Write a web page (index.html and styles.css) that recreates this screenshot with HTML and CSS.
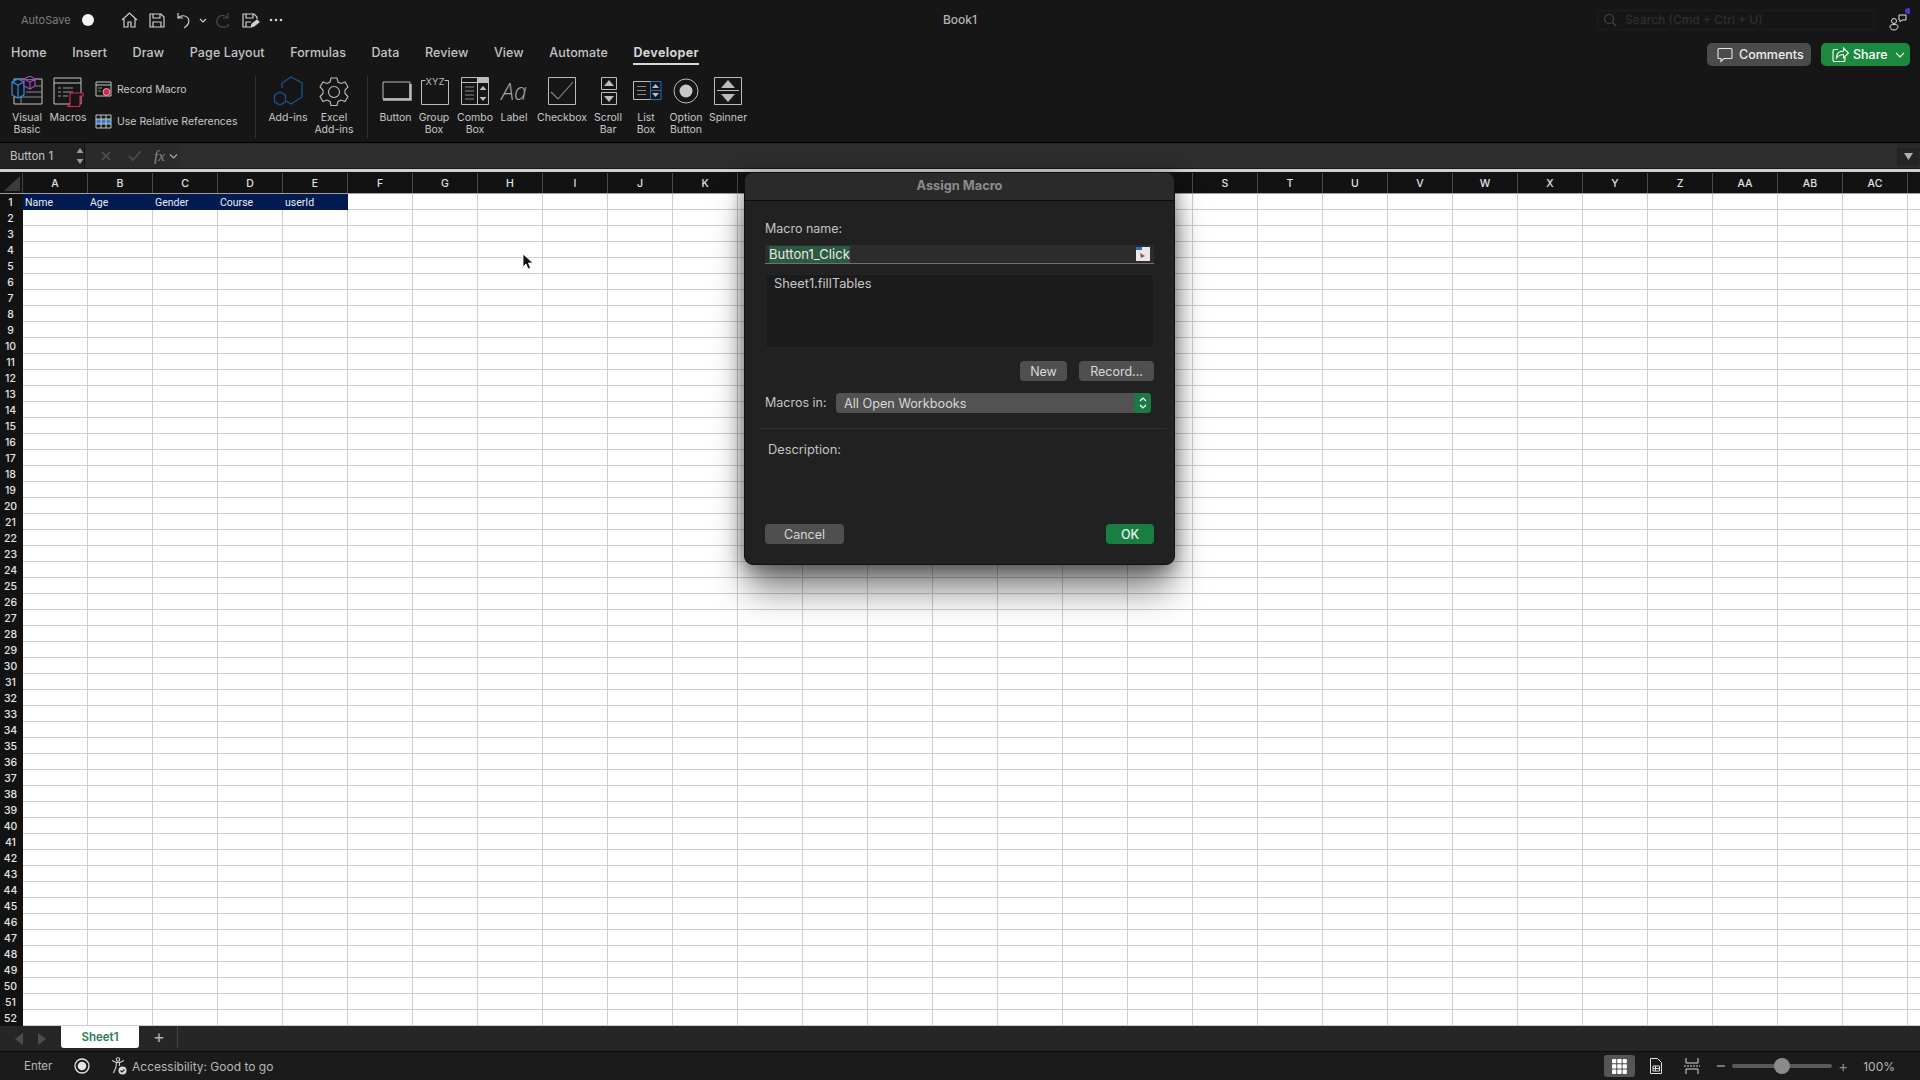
FILE: index.html
```html
<!DOCTYPE html>
<html lang="en">
<head>
<meta charset="UTF-8">
<meta name="viewport" content="width=device-width, initial-scale=1.0">
<title>Book1</title>
<link rel="stylesheet" href="styles.css">
</head>
<body>
<div class="app">

<!-- title bar -->
<header class="titlebar">
    <div class="quick">
        <span class="autosave">AutoSave</span>
        <span class="toggle"></span>
        <svg class="qa" width="27" height="18" viewBox="0 0 27 18" fill="none" stroke="#d0d0d0" stroke-width="1.2"><path d="M6 9 13.5 2 21 9M8 8v8h4v-5h3v5h4V8"/></svg>
        <svg class="qa" width="27" height="18" viewBox="0 0 27 18" fill="none" stroke="#d0d0d0" stroke-width="1.2"><path d="M7 3h11l3 3v10H7zM10 3v4h7V3M10 16v-5h8v5"/></svg>
        <svg class="qa" width="27" height="18" viewBox="0 0 27 18" fill="none" stroke="#d0d0d0" stroke-width="1.2"><path d="M8 2v5h5M8 7c3-3 8-3 10 0s1 7-4 10"/></svg>
        <svg class="qa-small" width="12" height="18" viewBox="0 0 12 18" fill="none" stroke="#c8c8c8" stroke-width="1.2"><path d="M3 8l3 3 3-3"/></svg>
        <svg class="qa" width="27" height="18" viewBox="0 0 27 18" fill="none" stroke="#4a4a4a" stroke-width="1.2"><path d="M19 2v5h-5M19 7c-3-4-10-3-11 2s3 8 8 7 3-2 3-3"/></svg>
        <svg class="qa" width="27" height="18" viewBox="0 0 27 18" fill="none" stroke="#d0d0d0" stroke-width="1.2"><path d="M14 16H7V3h11l3 3v2M10 3v4h7V3M10 16v-5h5"/><path d="M15 16l1-3 5-4 2 2-5 4z" fill="#d0d0d0"/></svg>
        <svg class="qa" width="27" height="18" viewBox="0 0 27 18" fill="#d0d0d0"><circle cx="8" cy="9" r="1.3"/><circle cx="13" cy="9" r="1.3"/><circle cx="18" cy="9" r="1.3"/></svg>
    </div>
    <div class="doc-name">Book1</div>
    <div class="title-right">
        <div class="search">
            <svg width="14" height="14" viewBox="0 0 14 14" fill="none" stroke="#444" stroke-width="1.2"><circle cx="6" cy="6" r="4.5"/><path d="M9.5 9.5 13 13"/></svg>
            <span>Search (Cmd + Ctrl + U)</span>
        </div>
        <svg class="collab" width="22" height="24" viewBox="0 0 22 24" fill="none" stroke="#e0e0e0" stroke-width="1"><circle cx="6" cy="13" r="2.5"/><path d="M2 18c0-2 8-2 8 0s-1 4-4 4-4-2-4-4z"/><path d="M11 7h7v5h-4l-2 2v-2h-1z"/><circle cx="20" cy="3" r="3" fill="#4a35c8" stroke="none"/></svg>
    </div>
</header>

<!-- ribbon tabs -->
<nav class="tabs">
    <span class="tab">Home</span>
    <span class="tab">Insert</span>
    <span class="tab">Draw</span>
    <span class="tab">Page Layout</span>
    <span class="tab">Formulas</span>
    <span class="tab">Data</span>
    <span class="tab">Review</span>
    <span class="tab">View</span>
    <span class="tab">Automate</span>
    <span class="tab active">Developer</span>
    <div class="tab-actions">
        <button class="btn-comments">
            <svg width="18" height="18" viewBox="0 0 18 18" fill="none" stroke="#e6e6e6" stroke-width="1.1"><path d="M3 2.5h12a1 1 0 0 1 1 1v8a1 1 0 0 1-1 1H8l-3 3v-3H3a1 1 0 0 1-1-1v-8a1 1 0 0 1 1-1z"/></svg>
            Comments
        </button>
        <button class="btn-share">
            <svg width="18" height="18" viewBox="0 0 18 18" fill="none" stroke="#fff" stroke-width="1.1"><path d="M7 3.5H3.5a1.5 1.5 0 0 0-1.500 1.500v9a1.500 1.500 0 0 0 1.500 1.500h9a1.500 1.500 0 0 0 1.500-1.500v-3"/><path d="M5.500 12c0-5 3-7 7-7V2l5 5-5 5V8.500c-3 0-5 1-7 3.500z"/></svg>
            Share
            <svg class="share-caret" width="10" height="8" viewBox="0 0 10 8" fill="none" stroke="#e8f5ec" stroke-width="1.1"><path d="M1 2l4 4 4-4"/></svg>
        </button>
    </div>
</nav>

<!-- ribbon -->
<section class="ribbon">
    <div class="rib-item w-vb">
        <svg width="32" height="32" viewBox="0 0 32 32" fill="none"><path d="M3 3h28v25H3z" stroke="#c4c4c4"/><path d="M15 10h16M15 16h16M3 21h28M10 21v7" stroke="#8a8a8a"/><path d="M1 6l6-3 6 3v13l-6 3-6-3zM1 6l6 3 6-3M7 9v13" fill="#161616" stroke="#2d8fe0" stroke-width="1.2"/><path d="M13 3l6-3 5 3v7l-5 3-6-3zM13 3l6 3 5-3M19 6v7" fill="#161616" stroke="#a04cc0" stroke-width="1.200"/></svg>
        <span class="rib-label">Visual<br>Basic</span>
    </div>
    <div class="rib-item w-mac">
        <svg width="32" height="32" viewBox="0 0 32 32" fill="none"><path d="M2 2h27v26H2zM2 7h27" stroke="#c4c4c4"/><path d="M6 12h3M11 12h10M6 16h3M11 16h10M6 20h3M11 20h5" stroke="#9a9a9a"/><path d="M19 17h12v3h-3v9a1.500 1.500 0 0 1-1.500 1.500H16l2-2V18a1 1 0 0 1 1-1z" fill="#161616" stroke="#d8264e" stroke-width="1.200"/></svg>
        <span class="rib-label">Macros</span>
    </div>
    <div class="rib-small">
        <div class="small-row">
            <svg width="17" height="17" viewBox="0 0 17 17" fill="none"><path d="M1 1h15v14H1zM1 4h15" stroke="#c4c4c4"/><path d="M3 7h4M3 10h3" stroke="#888"/><circle cx="11.500" cy="11" r="3.500" fill="#d8264e" stroke="#e8a0b0"/></svg>
            <span>Record Macro</span>
        </div>
        <div class="small-row">
            <svg width="17" height="15" viewBox="0 0 17 15" fill="none"><path d="M1 5h15v5H1z" fill="#2f7fd0"/><path d="M1 1h15v13H1zM1 5h15M1 10h15M6 1v13M11 1v13" stroke="#c4c4c4"/></svg>
            <span>Use Relative References</span>
        </div>
    </div>
    <div class="rib-sep"></div>
    <div class="rib-item w-add">
        <svg width="32" height="32" viewBox="0 0 32 32" fill="none" stroke="#17518f" stroke-width="1.300"><path d="M10 12V7l9-6 11 6v14l-11 7-5-3"/><path d="M8 16l5.500 3.200v6.600L8 29l-5.500-3.200v-6.600z"/></svg>
        <span class="rib-label">Add-ins</span>
    </div>
    <div class="rib-item w-xadd">
        <svg width="32" height="32" viewBox="0 0 32 32" fill="none" stroke="#bcbcbc" stroke-width="1.100"><path d="M13 2h6l1 4 3 1.500 4-1.500 3 5-3 3v3.500l3 3-3 5-4-1.500-3 1.500-1 4h-6l-1-4-3-1.500-4 1.500-3-5 3-3V14l-3-3 3-5 4 1.500L12 6z"/><circle cx="16" cy="16" r="5.500"/></svg>
        <span class="rib-label">Excel<br>Add-ins</span>
    </div>
    <div class="rib-sep sep2"></div>
    <div class="rib-item w-btn">
        <svg width="32" height="32" viewBox="0 0 32 32" fill="none"><path d="M3 6h27v17H3z" stroke="#bcbcbc"/><path d="M3 23.500h27.500V8" stroke="#bcbcbc" stroke-width="2.500"/></svg>
        <span class="rib-label">Button</span>
    </div>
    <div class="rib-item w-grp">
        <svg width="32" height="32" viewBox="0 0 32 32" fill="none"><path d="M7.500 4.500h-4v24h27v-24h-4" stroke="#bcbcbc"/><text x="17" y="9" text-anchor="middle" class="xyz">XYZ</text></svg>
        <span class="rib-label">Group<br>Box</span>
    </div>
    <div class="rib-item w-cmb">
        <svg width="32" height="32" viewBox="0 0 32 32" fill="none"><path d="M2.500 1.500h27v27h-27zM2.500 6.500h27M18.500 1.500v27" stroke="#bcbcbc"/><path d="M18.500 1.500h11v5h-11z" fill="#bcbcbc"/><path d="M6 11h9M6 15h9M6 19h9M6 23h9" stroke="#888"/><path d="M24 10l3.500 4h-7zM24 25l3.500-4h-7z" fill="#bcbcbc"/></svg>
        <span class="rib-label">Combo<br>Box</span>
    </div>
    <div class="rib-item w-lbl">
        <span class="aa-icon">Aa</span>
        <span class="rib-label">Label</span>
    </div>
    <div class="rib-item w-chk">
        <svg width="32" height="32" viewBox="0 0 32 32" fill="none"><path d="M2.500 1.500h27v27h-27z" stroke="#bcbcbc"/><path d="M5 16l7 7 15-17" stroke="#7f9484" stroke-width="1.100"/></svg>
        <span class="rib-label">Checkbox</span>
    </div>
    <div class="rib-item w-scr">
        <svg width="32" height="32" viewBox="0 0 32 32" fill="none"><path d="M9.500 1.500h15v12h-15zM9.500 16.500h15v12h-15z" stroke="#bcbcbc"/><path d="M17 4l5 6H12zM17 26l5-6H12z" fill="#bcbcbc"/></svg>
        <span class="rib-label">Scroll<br>Bar</span>
    </div>
    <div class="rib-item w-lst">
        <svg width="32" height="32" viewBox="0 0 32 32" fill="none"><path d="M3.500 5.500h17v18h-17z" stroke="#bcbcbc"/><path d="M7 10.500h9M7 14.500h9M7 18.500h9" stroke="#888"/><path d="M20.500 5.500h10.500v18H20.500zM20.500 14.500H31" stroke="#1f6fc0"/><path d="M25.500 8l3.500 4h-7zM25.500 21l3.500-4h-7z" fill="#bcbcbc"/></svg>
        <span class="rib-label">List<br>Box</span>
    </div>
    <div class="rib-item w-opt">
        <svg width="32" height="32" viewBox="0 0 32 32" fill="none"><circle cx="16" cy="15" r="12" stroke="#bcbcbc"/><circle cx="16" cy="15" r="6.500" fill="#c8c8c8"/></svg>
        <span class="rib-label">Option<br>Button</span>
    </div>
    <div class="rib-item w-spn">
        <svg width="32" height="32" viewBox="0 0 32 32" fill="none"><path d="M2.500 1.500h27v27h-27z" stroke="#bcbcbc"/><path d="M5 14.500h22" stroke="#bcbcbc"/><path d="M16 4l7 8H9zM16 26l7-8H9z" fill="#bcbcbc"/></svg>
        <span class="rib-label">Spinner</span>
    </div>
</section>

<!-- formula bar -->
<section class="formula">
    <div class="name-box">
        <span>Button 1</span>
        <svg width="8" height="18" viewBox="0 0 8 18" fill="#9a9a9a"><path d="M4 1l3.500 5H.5zM4 17l3.500-5H.5z"/></svg>
    </div>
    <div class="formula-tools">
        <svg width="12" height="12" viewBox="0 0 12 12" fill="none" stroke="#4c4c4c" stroke-width="1.800"><path d="M2 2l8 8M10 2l-8 8"/></svg>
        <svg class="tool-check" width="14" height="12" viewBox="0 0 14 12" fill="none" stroke="#4c4c4c" stroke-width="1.800"><path d="M1 6l4 4 8-9"/></svg>
        <span class="fx">fx</span>
        <svg width="9" height="7" viewBox="0 0 9 7" fill="none" stroke="#aaa" stroke-width="1.200"><path d="M1 1.500l3.500 3.500L8 1.500"/></svg>
    </div>
    <div class="formula-input"></div>
    <div class="formula-drop"><svg width="9" height="7" viewBox="0 0 9 7" fill="#b0b0b0"><path d="M0 0h9L4.500 7z"/></svg></div>
</section>

<!-- sheet -->
<section class="col-head">
    <div class="corner"><svg width="16" height="15" viewBox="0 0 16 15" fill="#3c3c3c"><path d="M16 0v15H0z"/></svg></div>
    <div class="col">A</div><div class="col">B</div><div class="col">C</div><div class="col">D</div><div class="col">E</div>
    <div class="col">F</div><div class="col">G</div><div class="col">H</div><div class="col">I</div><div class="col">J</div>
    <div class="col">K</div><div class="col"></div><div class="col"></div><div class="col"></div><div class="col"></div>
    <div class="col"></div><div class="col"></div><div class="col"></div><div class="col">S</div><div class="col">T</div>
    <div class="col">U</div><div class="col">V</div><div class="col">W</div><div class="col">X</div><div class="col">Y</div>
    <div class="col">Z</div><div class="col">AA</div><div class="col">AB</div><div class="col">AC</div><div class="col"></div>
</section>
<section class="sheet">
    <div class="row-head">
        <div>1</div><div>2</div><div>3</div><div>4</div><div>5</div><div>6</div><div>7</div><div>8</div><div>9</div><div>10</div>
        <div>11</div><div>12</div><div>13</div><div>14</div><div>15</div><div>16</div><div>17</div><div>18</div><div>19</div><div>20</div>
        <div>21</div><div>22</div><div>23</div><div>24</div><div>25</div><div>26</div><div>27</div><div>28</div><div>29</div><div>30</div>
        <div>31</div><div>32</div><div>33</div><div>34</div><div>35</div><div>36</div><div>37</div><div>38</div><div>39</div><div>40</div>
        <div>41</div><div>42</div><div>43</div><div>44</div><div>45</div><div>46</div><div>47</div><div>48</div><div>49</div><div>50</div>
        <div>51</div><div>52</div>
    </div>
    <div class="grid">
        <div class="table-head">
            <span>Name</span><span>Age</span><span>Gender</span><span>Course</span><span>userId</span>
        </div>
    </div>
</section>

<!-- sheet tabs -->
<section class="sheetbar">
    <div class="sheet-nav">
        <svg width="8" height="12" viewBox="0 0 8 12" fill="#4d4d4d"><path d="M8 0v12L0 6z"/></svg>
        <svg width="8" height="12" viewBox="0 0 8 12" fill="#4d4d4d"><path d="M0 0v12l8-6z"/></svg>
    </div>
    <div class="sheet-tab">Sheet1</div>
    <div class="sheet-add">+</div>
</section>

<!-- status bar -->
<footer class="status">
    <span class="mode">Enter</span>
    <svg class="rec" width="16" height="16" viewBox="0 0 16 16"><circle cx="8" cy="8" r="7" fill="none" stroke="#e4e4e4" stroke-width="1.300"/><circle cx="8" cy="8" r="4.300" fill="#e4e4e4"/></svg>
    <svg class="acc" width="16" height="18" viewBox="0 0 16 18" fill="none" stroke="#d0d0d0" stroke-width="1.100"><circle cx="7" cy="2.500" r="1.700"/><path d="M1 3.500l4 2h4l4-2M5.500 5.500 5 10l-2.500 6M8.500 5.500V9"/><circle cx="11.500" cy="13.500" r="4" fill="#d8d8d8" stroke="none"/><path d="M9.500 13.500l1.500 1.500 2.500-2.500" stroke="#222"/></svg>
    <span class="acc-text">Accessibility: Good to go</span>
    <div class="status-right">
        <div class="view-on"><svg width="15" height="15" viewBox="0 0 15 15" fill="#fff"><rect width="4.300" height="4.300" rx="1"/><rect x="5.300" width="4.300" height="4.300" rx=".6"/><rect x="10.600" width="4.300" height="4.300" rx="1"/><rect y="5.300" width="4.300" height="4.300" rx=".6"/><rect x="5.300" y="5.300" width="4.300" height="4.300" rx=".6"/><rect x="10.600" y="5.300" width="4.300" height="4.300" rx=".6"/><rect y="10.600" width="4.300" height="4.300" rx="1"/><rect x="5.300" y="10.600" width="4.300" height="4.300" rx=".6"/><rect x="10.600" y="10.600" width="4.300" height="4.300" rx="1"/></svg></div>
        <svg class="view-page" width="12" height="16" viewBox="0 0 12 16" fill="none" stroke="#e0e0e0"><path d="M.5.500h7l4 4v11H.5z"/><path d="M3 8h6.500v5H3zM3 10.500h6.500M5.500 8v5"/></svg>
        <svg class="view-break" width="16" height="16" viewBox="0 0 16 16" fill="none" stroke="#d8d8d8"><path d="M2 0v5h12V0M2 16v-5h12v5"/><path d="M0 8h16" stroke-dasharray="2 1"/></svg>
        <span class="zoom-minus"></span>
        <div class="slider"><span class="thumb"></span></div>
        <span class="zoom-plus">+</span>
        <span class="zoom-val">100%</span>
    </div>
</footer>

</div>

<!-- assign macro dialog -->
<div class="dialog">
    <div class="dlg-title">Assign Macro</div>
    <div class="dlg-body">
        <div class="dlg-label">Macro name:</div>
        <div class="dlg-input">
            <span class="sel">Button1_Click</span>
            <svg width="14" height="14" viewBox="0 0 14 14"><path d="M0 0h14v14H0z" fill="#e8e8e8"/><path d="M0 0h6v3H0z" fill="#2a6fc0"/><path d="M4 6l5 3-4 2z" fill="#b5405a"/></svg>
        </div>
        <div class="dlg-list">Sheet1.fillTables</div>
        <div class="dlg-actions">
            <button class="dlg-btn btn-new">New</button>
            <button class="dlg-btn btn-record">Record...</button>
        </div>
        <div class="dlg-macros">
            <span class="dlg-label">Macros in:</span>
            <div class="dlg-select">
                <span>All Open Workbooks</span>
                <span class="select-arrows"><svg width="8" height="12" viewBox="0 0 8 12" fill="none" stroke="#fff" stroke-width="1.200"><path d="M1 4l3-3 3 3M1 8l3 3 3-3"/></svg></span>
            </div>
        </div>
        <div class="dlg-rule"></div>
        <div class="dlg-label dlg-desc">Description:</div>
        <div class="dlg-footer">
            <button class="dlg-btn btn-cancel">Cancel</button>
            <button class="dlg-btn btn-ok">OK</button>
        </div>
    </div>
</div>

<!-- mouse pointer -->
<svg class="pointer" width="12" height="18" viewBox="0 0 12 18"><path d="M1 1v13l3-3 2 5 2.500-1-2-5h4.500z" fill="#111" stroke="#fff" stroke-width=".8"/></svg>
</body>
</html>
```

FILE: styles.css
```css
/* Excel window with the Assign Macro dialog */
* {
    box-sizing: border-box;
}
body {
    margin: 0;
    width: 1920px;
    height: 1080px;
    overflow: hidden;
    position: relative;
    background-color: #161616;
    font-family: Inter, "Noto Sans", "Liberation Sans", sans-serif;
    color: #c8c8c8;
}
.app {
    display: flex;
    flex-direction: column;
    height: 1080px;
}
button {
    font-family: inherit;
    border: none;
    padding: 0;
}

/* title bar */
.titlebar {
    height: 36px;
    display: grid;
    grid-template-columns: 1fr auto 1fr;
    align-items: center;
    padding-top: 3px;
}
.quick {
    display: flex;
    align-items: center;
    padding-left: 21px;
}
.autosave {
    font-size: 11px;
    color: #7d7d7d;
    width: 61px;
}
.toggle {
    width: 12px;
    height: 12px;
    border-radius: 50%;
    background-color: #f2f2f2;
    margin-right: 22px;
}
.doc-name {
    font-size: 12px;
    font-weight: 500;
    color: #b4b4b4;
}
.title-right {
    display: flex;
    justify-content: flex-end;
    align-items: center;
    padding-right: 10px;
}
.search {
    width: 277px;
    height: 20px;
    border: 1px solid #1d1d1d;
    display: flex;
    align-items: center;
    gap: 8px;
    padding-left: 5px;
    font-size: 12px;
    font-weight: 500;
    color: #2e2e2e;
    margin-right: 14px;
}

/* ribbon tabs */
.tabs {
    height: 36px;
    display: flex;
    align-items: flex-start;
    gap: 25.500px;
    padding: 8px 10px 0 11px;
}
.tab {
    font-size: 12.500px;
    font-weight: 500;
    letter-spacing: 0.1px;
    line-height: 18px;
    padding-bottom: 1px;
    border-bottom: 2px solid transparent;
    color: #c4c4c4;
}
.tab.active {
    font-weight: 700;
    letter-spacing: 0.35px;
    color: #d4d4d4;
    border-bottom-color: #d8d8d8;
}
.tab-actions {
    margin: -1px 0 0 auto;
    display: flex;
    gap: 10px;
}
.btn-comments, .btn-share {
    height: 23px;
    border-radius: 5px;
    font-size: 12.500px;
    font-weight: 500;
    display: flex;
    align-items: center;
    gap: 5px;
}
.btn-comments {
    width: 104px;
    background-color: #4b4b4b;
    color: #eee;
    padding-left: 9px;
}
.btn-share {
    width: 89px;
    background-color: #1b8a3e;
    color: #fff;
    padding-left: 10px;
    gap: 4px;
}
.share-caret {
    margin-left: 3px;
}

/* ribbon */
.ribbon {
    height: 71px;
    display: flex;
    padding: 4px 0 0 8px;
    border-bottom: 1px solid #000;
}
.rib-item {
    display: flex;
    flex-direction: column;
    align-items: center;
    flex-shrink: 0;
}
.rib-item svg {
    flex-shrink: 0;
    display: block;
}
.rib-label {
    margin-top: 4px;
    font-size: 10.500px;
    line-height: 12px;
    text-align: center;
    color: #c8c8c8;
    white-space: nowrap;
}
.w-vb { width: 38px; }
.w-mac { width: 44px; }
.w-add { width: 40px; }
.w-xadd { width: 52px; }
.w-btn { width: 41px; }
.w-grp { width: 36px; }
.w-cmb { width: 46px; }
.w-lbl { width: 32px; }
.w-chk { width: 64px; }
.w-scr { width: 28px; }
.w-lst { width: 48px; }
.w-opt { width: 32px; }
.w-spn { width: 52px; }
.rib-small {
    width: 160px;
    padding: 5px 0 0 5px;
    display: flex;
    flex-direction: column;
    gap: 15px;
}
.small-row {
    display: flex;
    align-items: center;
    gap: 5px;
    height: 17px;
    font-size: 10.500px;
    color: #c8c8c8;
    white-space: nowrap;
}
.rib-sep {
    width: 1px;
    height: 62px;
    background-color: #333;
    margin: 0 12px 0 5px;
}
.sep2 {
    margin: 0 7px 0 7px;
}
.xyz {
    font-size: 9.500px;
    fill: #bcbcbc;
}
.aa-icon {
    height: 32px;
    font-family: "Open Sans", sans-serif;
    font-size: 23px;
    font-weight: 300;
    font-style: italic;
    line-height: 30px;
    color: #a8a8a8;
}

/* formula bar */
.formula {
    height: 25px;
    display: flex;
    align-items: center;
    background-color: #2a2a2a;
}
.name-box {
    width: 85px;
    height: 25px;
    display: flex;
    align-items: center;
    justify-content: space-between;
    padding: 0 0 0 10px;
    font-size: 11.500px;
    color: #c4c4c4;
    background-color: #232323;
    border-right: 1px solid #111;
}
.formula-tools {
    width: 95px;
    display: flex;
    align-items: center;
    padding: 1px 0 0 15px;
}
.tool-check {
    margin-left: 16px;
}
.fx {
    font-family: "Liberation Serif", serif;
    font-style: italic;
    font-size: 15px;
    color: #8a8a8a;
    margin: 0 4px 0 12px;
}
.formula-input {
    flex: 1;
    height: 24px;
    background-color: #2d2d2d;
}
.formula-drop {
    width: 22px;
    height: 17px;
    margin: 1px 1px 0 0;
    background-color: #242424;
    display: flex;
    align-items: center;
    justify-content: center;
}

/* sheet */
.col-head {
    height: 25px;
    margin-top: 1px;
    padding-top: 1px;
    display: flex;
    background-color: #121212;
    border-top: 3px solid #cfcfcf;
    border-bottom: 1px solid #a0a0a0;
    overflow: hidden;
}
.corner {
    width: 23px;
    flex-shrink: 0;
    display: flex;
    align-items: flex-end;
    justify-content: flex-end;
    padding: 0 2px 2px 0;
    border-right: 1px solid #444;
}
.col {
    width: 65px;
    flex-shrink: 0;
    text-align: center;
    font-size: 10.500px;
    font-weight: 500;
    line-height: 21px;
    color: #e2e2e2;
    border-right: 1px solid #4a4a4a;
}
.sheet {
    height: 832px;
    display: flex;
}
.row-head {
    width: 23px;
    flex-shrink: 0;
    background-color: #121212;
}
.row-head div {
    height: 16px;
    line-height: 18px;
    padding-right: 2px;
    text-align: center;
    font-size: 10.500px;
    font-weight: 500;
    color: #e6e6e6;
}
.grid {
    flex: 1;
    background-color: #fff;
    background-image:
        linear-gradient(to left, #cdcdcd 1px, transparent 1px),
        linear-gradient(to top, #cdcdcd 1px, transparent 1px);
    background-size: 65px 16px;
}
.table-head {
    width: 325px;
    height: 16px;
    display: flex;
    background-color: #011a52;
}
.table-head span {
    width: 65px;
    padding-left: 2px;
    font-family: Roboto, "Liberation Sans", sans-serif;
    font-size: 10.500px;
    line-height: 18px;
    color: #e8ecf4;
}

/* sheet tabs */
.sheetbar {
    height: 26px;
    display: flex;
    align-items: flex-start;
    background-color: #262626;
    border-bottom: 1px solid #0c0c0c;
}
.sheet-nav {
    width: 61px;
    height: 25px;
    display: flex;
    align-items: center;
    gap: 15px;
    padding-left: 15px;
}
.sheet-tab {
    width: 78px;
    height: 22px;
    background-color: #fff;
    border-radius: 0 0 3px 3px;
    text-align: center;
    font-size: 11.500px;
    font-weight: 600;
    line-height: 23px;
    color: #2b7d52;
}
.sheet-add {
    width: 39px;
    height: 22px;
    padding-left: 2px;
    font-size: 18px;
    line-height: 22px;
    text-align: center;
    color: #b0b0b0;
    border-right: 1px solid #444;
}

/* status bar */
.status {
    height: 28px;
    display: flex;
    align-items: center;
    background-color: #1b1b1b;
    font-size: 11.500px;
    color: #b8b8b8;
    padding-left: 24px;
}
.mode {
    width: 50px;
}
.acc {
    margin-left: 21px;
}
.acc-text {
    margin-left: 5px;
    font-size: 12px;
}
.status-right {
    margin-left: auto;
    display: flex;
    align-items: center;
}
.view-on {
    width: 31px;
    height: 22px;
    border-radius: 3px;
    background-color: #555;
    display: flex;
    align-items: center;
    justify-content: center;
}
.view-page {
    margin-left: 15px;
}
.view-break {
    margin-left: 22px;
}
.zoom-minus {
    width: 8px;
    height: 2px;
    background-color: #777;
    margin: 0 7px 0 17px;
}
.slider {
    width: 100px;
    height: 4px;
    border-radius: 2px;
    background-color: #5a5a5a;
    display: flex;
    align-items: center;
    justify-content: center;
}
.thumb {
    width: 16px;
    height: 16px;
    border-radius: 50%;
    background-color: #8a8a8a;
}
.zoom-plus {
    font-size: 15px;
    color: #888;
    margin-left: 6px;
}
.zoom-val {
    margin: 0 25px 0 15px;
    font-size: 12px;
}

/* dialog */
.dialog {
    position: absolute;
    left: 744px;
    top: 172px;
    width: 431px;
    height: 393px;
    display: flex;
    flex-direction: column;
    background-color: #212121;
    border: 1px solid #111;
    border-radius: 9px;
    box-shadow: 0 28px 36px -4px rgba(0, 0, 0, 0.5), 0 4px 18px rgba(0, 0, 0, 0.4);
}
.dlg-title {
    height: 28px;
    line-height: 25px;
    text-align: center;
    font-size: 12.800px;
    font-weight: 700;
    color: #8c8c8c;
    background-color: #2a2a2a;
    border-bottom: 1px solid #0d0d0d;
    border-radius: 8px 8px 0 0;
}
.dlg-body {
    flex: 1;
    display: flex;
    flex-direction: column;
    padding: 20px 20px 20px 20px;
}
.dlg-label {
    font-size: 12.500px;
    line-height: 16px;
    color: #c4c4c4;
}
.dlg-input {
    margin-top: 8px;
    height: 19px;
    display: flex;
    align-items: center;
    justify-content: space-between;
    padding: 0 4px;
    background-color: #2c2c2c;
    border-bottom: 1px solid #707070;
}
.sel {
    font-size: 13px;
    letter-spacing: 0.05px;
    line-height: 17px;
    color: #eaeaea;
    background-color: #2c5a41;
}
.dlg-list {
    margin-top: 10px;
    height: 74px;
    padding: 0 8px;
    font-size: 12.800px;
    line-height: 18px;
    color: #c8c8c8;
    background-color: #1b1b1b;
    border: 1px solid #242424;
}
.dlg-actions {
    margin-top: 13px;
    display: flex;
    justify-content: flex-end;
    gap: 12px;
}
.dlg-btn {
    height: 20px;
    border-radius: 4px;
    font-size: 12.500px;
    color: #d8d8d8;
    background-color: #4f4f4f;
}
.btn-new { width: 47px; }
.btn-record { width: 75px; }
.dlg-macros {
    margin-top: 12px;
    display: flex;
    align-items: center;
}
.dlg-macros .dlg-label {
    width: 71px;
}
.dlg-select {
    width: 315px;
    height: 20px;
    padding-left: 8px;
    border-radius: 4px;
    background-color: #525252;
    display: flex;
    align-items: center;
    justify-content: space-between;
    font-size: 12.700px;
    color: #d8d8d8;
}
.select-arrows {
    width: 17px;
    height: 20px;
    border-radius: 4px;
    background-color: #1b7a42;
    display: flex;
    align-items: center;
    justify-content: center;
}
.dlg-rule {
    margin: 15px -13px 0 -6px;
    height: 1px;
    background-color: #2f2f2f;
}
.dlg-desc {
    margin: 13px 0 0 3px;
    font-size: 12.800px;
}
.dlg-footer {
    margin-top: auto;
    display: flex;
    justify-content: space-between;
}
.btn-cancel { width: 79px; }
.btn-ok {
    width: 48px;
    font-weight: 500;
    color: #e6f3ea;
    background-color: #1a7d44;
}

/* mouse pointer over the grid */
.pointer {
    position: absolute;
    left: 522px;
    top: 253px;
}
```
